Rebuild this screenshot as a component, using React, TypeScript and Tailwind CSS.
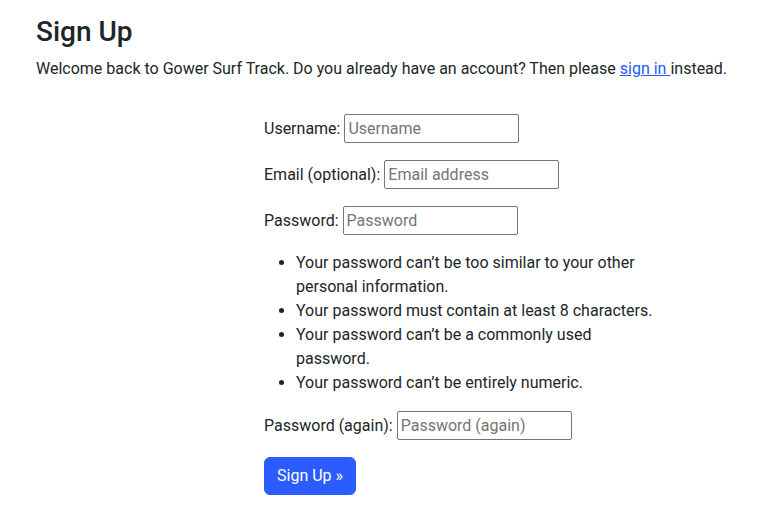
import React from "react";

const inputCls =
  "w-[175px] h-[29px] border border-[#767676] rounded-[2px] px-[3px] text-[16px] text-[#212529] placeholder:text-[#757575] outline-none bg-white";

function Field({ label, placeholder, type = "text" }: { label: string; placeholder: string; type?: string }) {
  return (
    <div className="flex items-center gap-[4px] mb-[17px]">
      <label>{label}</label>
      <input type={type} placeholder={placeholder} className={inputCls} />
    </div>
  );
}

export default function App() {
  return (
    <div
      className="min-h-screen bg-white text-[#212529] text-[16px] leading-[24px] px-[36px] pt-[15px]"
      style={{ fontFamily: "Roboto, 'Liberation Sans', sans-serif" }}
    >
      <h1 className="text-[28px] leading-[34px] font-medium mb-[8px]">Sign Up</h1>
      <p className="mb-[33px]">
        Welcome back to Gower Surf Track. Do you already have an account? Then please{" "}
        <a href="#" className="text-[#1a5cff] underline">
          sign in{" "}
        </a>
        instead.
      </p>

      {/* Signup form */}
      <form className="ml-[228px] w-[400px]">
        <Field label="Username:" placeholder="Username" />
        <Field label="Email (optional):" placeholder="Email address" type="email" />
        <div className="flex items-center gap-[4px]">
          <label>Password:</label>
          <input type="password" placeholder="Password" className={inputCls} />
        </div>
        <ul className="list-disc pl-[32px] my-[16px]">
          <li>Your password can’t be too similar to your other personal information.</li>
          <li>Your password must contain at least 8 characters.</li>
          <li>Your password can’t be a commonly used password.</li>
          <li>Your password can’t be entirely numeric.</li>
        </ul>
        <Field label="Password (again):" placeholder="Password (again)" type="password" />
        <button
          type="button"
          className="bg-[#2b5cff] text-white rounded-[6px] px-[12px] py-[6px] border border-[#2b5cff] leading-[24px]"
        >
          Sign Up »
        </button>
      </form>
    </div>
  );
}
